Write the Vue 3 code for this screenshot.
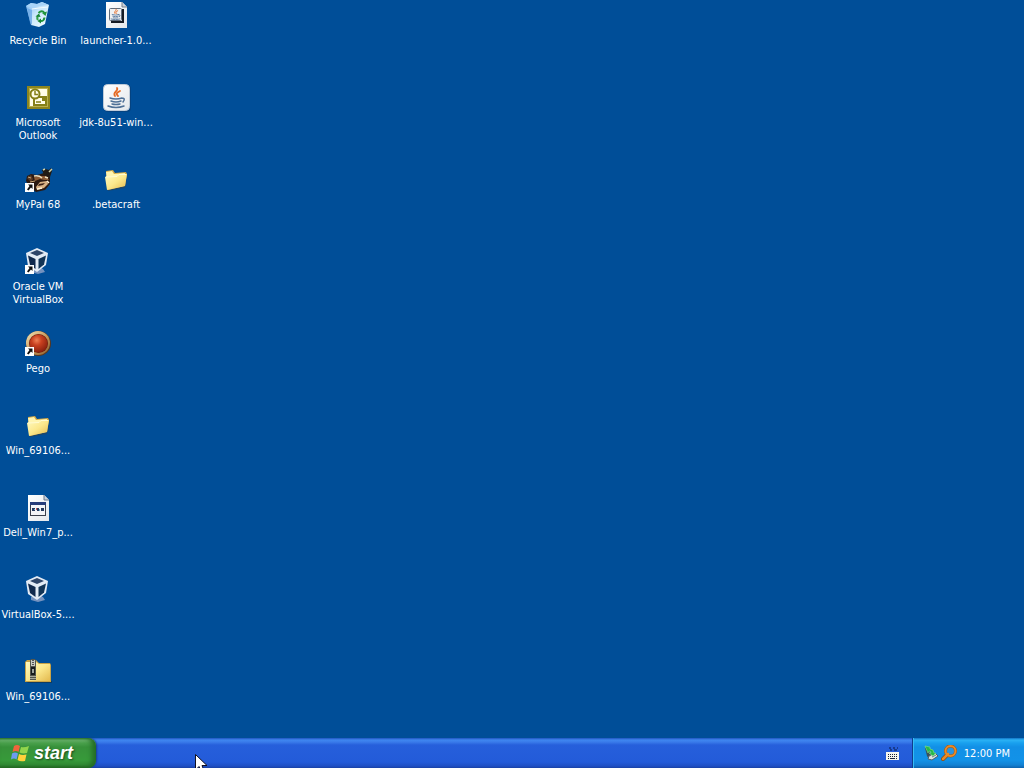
<script setup>
const items = [
  { icon: 'bin', label: 'Recycle Bin' },
  { icon: 'outlook', label: 'Microsoft Outlook' },
  { icon: 'mypal', label: 'MyPal 68', shortcut: true },
  { icon: 'vbox', label: 'Oracle VM VirtualBox', shortcut: true },
  { icon: 'pego', label: 'Pego', shortcut: true },
  { icon: 'folder', label: 'Win_69106...' },
  { icon: 'exe', label: 'Dell_Win7_p...' },
  { icon: 'vbox', label: 'VirtualBox-5....' },
  { icon: 'zip', label: 'Win_69106...' },
  { icon: 'jar', label: 'launcher-1.0...' },
  { icon: 'java', label: 'jdk-8u51-win...' },
  { icon: 'folder', label: '.betacraft' },
]
</script>

<template>
  <div class="screen">
    <svg class="defs" aria-hidden="true">
      <defs>
        <linearGradient id="paper" x1="0" y1="0" x2="1" y2="1">
          <stop offset="0" stop-color="#fff" /><stop offset="1" stop-color="#e4e8ec" />
        </linearGradient>
        <linearGradient id="glass" x1="0" y1="0" x2="1" y2="1">
          <stop offset="0" stop-color="#79b4f0" /><stop offset=".45" stop-color="#c9e8fb" /><stop offset="1" stop-color="#f4fcff" />
        </linearGradient>
        <linearGradient id="manila" x1="0" y1="0" x2="1" y2="1">
          <stop offset="0" stop-color="#fffac0" /><stop offset=".5" stop-color="#fbe88c" /><stop offset="1" stop-color="#e3b94e" />
        </linearGradient>
        <radialGradient id="ruby" cx=".4" cy=".32" r=".7">
          <stop offset="0" stop-color="#ee8054" /><stop offset=".4" stop-color="#c8401f" /><stop offset="1" stop-color="#86200e" />
        </radialGradient>
        <linearGradient id="brass" x1="0" y1="0" x2="1" y2="1">
          <stop offset="0" stop-color="#f4e6b8" /><stop offset=".5" stop-color="#c99d60" /><stop offset="1" stop-color="#8a5a2a" />
        </linearGradient>
        <g id="cup">
          <path d="M11 2C13 5 6 6 9 10M14 5C10 7 10 8 12 10" fill="none" stroke="#e66b25" stroke-width="1.8" stroke-linecap="round" />
          <path d="M4 12Q10 14 16 12M5 15Q10 17 15 15M6 18Q10 19 14 18M2 20Q10 23 18 20M16 12Q20 12 17 16" fill="none" stroke="#4d6f96" stroke-width="1.5" stroke-linecap="round" />
        </g>
      </defs>
    </svg>

    <main class="desktop">
      <button v-for="(item, i) in items" :key="i" type="button" class="item">
        <svg class="pic" viewBox="0 0 32 32" aria-hidden="true">
          <g v-if="item.icon === 'bin'">
            <path d="M4 6L9 3L15 4L20 2L27 5L23 24L17 27L9 25Z" fill="url(#glass)" />
            <path d="M4 6L10 8L17 6L27 5L20 2L15 4L9 3Z" fill="#a8d4f8" />
            <path d="M5 8L10 10L10 25L8 23Z" fill="#5e9fe4" opacity=".7" />
            <path d="M10 9L17 8L26 7" fill="none" stroke="#f2fcff" />
            <path d="M16.500 13Q20 9.500 22.500 13" fill="none" stroke="#22953c" stroke-width="2" />
            <path d="M25 11.500L23.500 16L20 13Z" fill="#22953c" />
            <path d="M16 20Q14.500 18 16 16" fill="none" stroke="#35a44a" stroke-width="2" />
            <path d="M13.500 16.500L17 13.500L18.500 17Z" fill="#188536" />
            <path d="M18 21Q22 21.500 22.500 17.500" fill="none" stroke="#22953c" stroke-width="2" />
            <path d="M19 18.500V23.500L15.500 21Z" fill="#188536" />
          </g>
          <g v-else-if="item.icon === 'outlook'">
            <rect x="5" y="4" width="23" height="23" fill="#8c851f" />
            <rect x="7.500" y="6.500" width="18" height="18" fill="#fffde8" stroke="#b9b04c" />
            <rect x="12" y="15" width="12" height="8" fill="#fffde8" stroke="#858018" stroke-width="2" />
            <circle cx="13" cy="12" r="4.500" fill="#fffde8" stroke="#858018" stroke-width="2" />
            <path d="M13 9V12.500H16M14 20H19" fill="none" stroke="#858018" stroke-width="1.5" />
            <rect x="20" y="16" width="3" height="3" fill="#858018" />
          </g>
          <g v-else-if="item.icon === 'mypal'">
            <path d="M5 12L9 10L15 11L22 9L28 13L28 20L23 26L14 28L7 22L4 17Z" fill="#2b1a12" />
            <path d="M22 11L20 6L23 5L27 6L29 4L30 7L28 13Z" fill="#211b14" />
            <path d="M21 6L23 5M27 8L30 5" stroke="#cfd0a8" stroke-width="1.5" />
            <path d="M5 14L9 11L11 15L9 18Z" fill="#5a3a24" />
            <path d="M12 13L17 12L24 12L27 16L22 16L18 15L13 17Z" fill="#8a5a34" />
            <path d="M12 12Q17 11 20 14M23 13L26 14" fill="none" stroke="#efe0c0" stroke-width="1.5" />
            <path d="M18 18L25 17L26 20L22 24L15 26L14 23Z" fill="#d8b184" />
            <path d="M17 20L23 19L21 21L16 22Z" fill="#3b2115" />
            <path d="M25 17L27 19M15 25L20 24" stroke="#fff3d8" stroke-width="1.5" />
            <path d="M6 13L9 14M8 18L13 17" stroke="#c9a878" />
          </g>
          <g v-else-if="item.icon === 'vbox'">
            <path d="M9 23L15 20L21 23L23 26L16 28L9 26Z" fill="#899fc5" opacity=".85" />
            <path d="M15 2L26 7L24 19L15 26L6 20L4 7Z" fill="#e3ebf5" />
            <path d="M15 4L22 7L15 10L8 7Z" fill="#2d4468" />
            <path d="M6 9.500L13.500 13L13.500 23L8 19Z" fill="#10294d" />
            <path d="M16.500 13L24 9.500L22 18.500L16.500 23Z" fill="#123456" />
          </g>
          <g v-else-if="item.icon === 'pego'">
            <circle cx="16.5" cy="15.5" r="12.5" fill="#59361d" />
            <circle cx="16" cy="15" r="12" fill="url(#brass)" />
            <circle cx="16.5" cy="15.5" r="9.5" fill="#6e1d0c" />
            <circle cx="16.5" cy="15.5" r="9" fill="url(#ruby)" />
          </g>
          <g v-else-if="item.icon === 'folder'">
            <path d="M7 25L26 22L28 9L25 24L8 27Z" fill="#26445c" opacity=".7" />
            <path d="M6 7L13 6L15 9L26 8L27 10L25 22L8 26Z" fill="#d6a944" />
            <path d="M6 8L12 7L14 10L25 9L23 22L8 25Z" fill="#fff5b0" />
            <path d="M5 13L7 12L17 12L19 10L27 10L25 22L7 26Z" fill="url(#manila)" />
            <path d="M6 13L17 12.5L19 10.5L26 10.5" fill="none" stroke="#fffbd2" />
          </g>
          <g v-else-if="item.icon === 'exe'">
            <path d="M6 3H22L27 8V29H6Z" fill="url(#paper)" />
            <path d="M22 3V8H27" fill="#c9d0db" stroke="#68788d" />
            <rect x="8.500" y="10.500" width="15" height="13" fill="#f4f5f8" stroke="#3a3f4c" />
            <rect x="8" y="10" width="16" height="3" fill="#263c79" />
            <path d="M10 16H13V19H10ZM15 16H17V19H15ZM19 16H22V19H19Z" fill="#24385d" />
            <path d="M12 17H13V18H12ZM17 17H18V19H17Z" fill="#6aa9c9" />
            <path d="M14 16H15V18H14Z" fill="#c95050" />
          </g>
          <g v-else-if="item.icon === 'zip'">
            <path d="M4 25H30V27H6Z" fill="#16354f" opacity=".7" />
            <path d="M3 6L5 4H14L17 7H28L29 9V26H3Z" fill="#c9a346" />
            <path d="M4 6H14L17 8H28V25H4Z" fill="url(#manila)" />
            <path d="M8 5L9 3H13L14 5V24H8Z" fill="#55564c" />
            <path d="M9 4H13V10H9Z" fill="#c9cbc2" />
            <path d="M11 4V11" stroke="#555" stroke-width="2" stroke-dasharray="1 1" />
            <rect x="9" y="11" width="4" height="8" fill="#171b1d" />
            <path d="M10 13H12V17H10Z" fill="#9ca29c" />
            <path d="M8 20.500H14M8 22.500H14" stroke="#a9aa9c" />
          </g>
          <g v-else-if="item.icon === 'jar'">
            <path d="M6 2H22L27 7V28H6Z" fill="url(#paper)" />
            <path d="M22 2V7H27" fill="#ccd1d8" stroke="#78818c" />
            <path d="M11 22H23V9" fill="none" stroke="#151b24" stroke-width="2" />
            <rect x="9.500" y="8.500" width="12" height="12" rx="1" fill="#f0f1f2" stroke="#5f6b7a" />
            <use href="#cup" transform="translate(10 8) scale(.55)" />
          </g>
          <g v-else>
            <rect x="4" y="3" width="27" height="27" rx="4" fill="#093b70" opacity=".55" />
            <rect x="3.5" y="2.5" width="26" height="26" rx="4" fill="url(#paper)" stroke="#bfcbd9" />
            <use href="#cup" transform="translate(6 4)" />
          </g>
          <g v-if="item.shortcut">
            <rect x="3" y="19" width="9" height="9" fill="#fff" />
            <path d="M6 20.500H10.500V25L9 23.500L6.500 26.500L5 25.500L7.500 22Z" fill="#101010" />
          </g>
        </svg>
        <span class="label">{{ item.label }}</span>
      </button>
    </main>

    <footer class="taskbar">
      <button type="button" class="start">
        <svg class="flag" viewBox="0 0 18 18" aria-hidden="true">
          <path d="M3 2Q6 0 9 2L7.500 8Q5 6 1.500 8Z" fill="#f0643c" />
          <path d="M10 3Q13 4 18 2L16 9Q12 10 8.500 8.500Z" fill="#91d54c" />
          <path d="M1 9.500Q4 7.500 7 9.500L5.500 15.500Q3 13.500 0 15.500Z" fill="#6c9cf1" />
          <path d="M8 10Q11 11.500 15.500 10.500L14 17Q9 18 6.500 16Z" fill="#ffd13b" />
        </svg>
        <span>start</span>
      </button>
      <button type="button" class="lang" aria-label="Keyboard">
        <svg class="keys" viewBox="0 0 14 13" aria-hidden="true">
          <path d="M3 1H5M7 1H9M11 1H12M4 3H6M8 3H11" stroke="#091944" />
          <rect x="0" y="5" width="13" height="8" fill="#f5f5ee" />
          <path d="M2 7.500H12M2 9.500H12" stroke="#17213c" stroke-dasharray="1 1" />
          <path d="M2 11.500H3M4 11.500H9M10 11.500H11" stroke="#17213c" />
        </svg>
      </button>
      <div class="tray">
        <svg class="device" viewBox="0 0 14 16" aria-hidden="true">
          <path d="M1 3L4 2L8 12L5 14L3 11Z" fill="#39515b" />
          <path d="M5 11L11 8L14 11L8 15L4 14Z" fill="#dce4df" stroke="#4d616b" />
          <path d="M8 12L12 10" stroke="#687e84" />
          <path d="M1 1L6 2L6 4Q10 4 10 8L12 8L9 11L5 8H7Q7 6 5 6L4 8Z" fill="#25b84b" stroke="#9bed88" stroke-width=".5" />
        </svg>
        <svg class="lens" viewBox="0 0 16 16" aria-hidden="true">
          <path d="M7 9L2 14" stroke="#8f4a0c" stroke-width="4" stroke-linecap="round" />
          <circle cx="9.5" cy="6" r="5" fill="#2a94df" stroke="#a8590f" stroke-width="3" />
          <circle cx="9.5" cy="6" r="5" fill="none" stroke="#e88a28" stroke-width="2" />
          <path d="M7 9L2 14" stroke="#e88a28" stroke-width="2.5" stroke-linecap="round" />
        </svg>
        <time class="clock" datetime="12:00">12:00 PM</time>
      </div>
    </footer>

    <svg class="cursor" viewBox="0 0 13 20" aria-hidden="true">
      <path d="M.5 .5V16L4 12.500L7 19L9.500 18L7 11.500H12Z" fill="#fff" stroke="#101020" />
    </svg>
  </div>
</template>

<style>
body { margin: 0; }
</style>

<style scoped>
.screen {
  position: relative;
  display: flex;
  flex-direction: column;
  height: 100vh;
  overflow: hidden;
  background: #004e98;
  color: #fff;
  font-family: "DejaVu Sans Condensed", "DejaVu Sans", sans-serif;
  font-size: 11px;
  line-height: 13px;
}
.defs { position: absolute; width: 0; height: 0; }
button {
  margin: 0;
  padding: 0;
  border: 0;
  background: none;
  color: inherit;
  font: inherit;
}
.desktop {
  flex: 1;
  min-height: 0;
  display: grid;
  grid-auto-flow: column;
  grid-template-rows: repeat(auto-fill, 82px);
  grid-auto-columns: 76px;
  justify-content: start;
  column-gap: 2px;
}
.item {
  display: flex;
  flex-direction: column;
  align-items: center;
  gap: 2px;
}
.pic { width: 32px; height: 32px; flex: none; }
.label { max-width: 100%; text-align: center; }
.taskbar {
  flex: none;
  display: flex;
  height: 30px;
  background: linear-gradient(#1f55c0 0, #3f86f0 2px, #3a7bea 4px, #265fdb 7px, #235bd9 24px, #1f4fc4 28px, #1941a5 30px);
}
.start {
  display: flex;
  align-items: center;
  gap: 5px;
  width: 96px;
  padding-left: 11px;
  border-radius: 0 8px 8px 0;
  background: linear-gradient(#2f7c32 0, #6fb871 2px, #4aa14c 5px, #37913a 9px, #379a3a 22px, #318a33 27px, #20641f 30px);
  box-shadow: inset -4px 0 5px #246c25, 1px 0 2px #173f8f;
  font-family: "Liberation Sans", Arial, sans-serif;
  font-size: 18px;
  font-style: italic;
  font-weight: bold;
  line-height: 20px;
  text-shadow: 1px 1px 2px #1c4a1c;
}
.flag { width: 18px; height: 18px; }
.lang { margin-left: auto; padding-right: 12px; }
.keys { display: block; width: 14px; height: 13px; }
.tray {
  display: flex;
  align-items: center;
  padding: 0 14px 0 11px;
  border-left: 1px solid #103d8c;
  background: linear-gradient(#1273c4 0, #2bb2f5 2px, #19a0ee 5px, #1290e6 9px, #1292e8 22px, #1281d3 27px, #0d62ad 30px);
  box-shadow: inset 1px 0 0 #35bdf5;
}
.device { width: 14px; height: 16px; margin-right: 3px; }
.lens { width: 16px; height: 16px; margin-right: 7px; }
.cursor {
  position: absolute;
  left: 195px;
  bottom: -6px;
  width: 13px;
  height: 20px;
}
</style>
